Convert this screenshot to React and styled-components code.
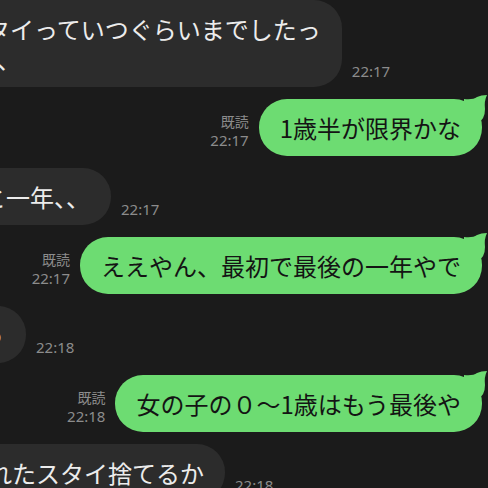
import React from 'react';
import styled, { createGlobalStyle } from 'styled-components';

const GlobalStyle = createGlobalStyle`
  html, body {
    margin: 0;
    padding: 0;
    background: #1b1b1b;
    overflow: hidden;
  }
  body {
    font-family: "Noto Sans CJK JP", "Noto Sans", sans-serif;
  }
`;

const Screen = styled.div`
  width: 488px;
  height: 488px;
  overflow: hidden;
  background: #1b1b1b;
`;

const Chat = styled.div`
  display: flex;
  flex-direction: column;
  gap: 12px;
`;

const Row = styled.div`
  display: flex;
  align-items: flex-end;
  justify-content: ${props => (props.$mine ? 'flex-end' : 'flex-start')};
  gap: 10px;
  padding-right: ${props => (props.$mine ? '6px' : '0')};
`;

const Bubble = styled.div`
  position: relative;
  flex-shrink: 0;
  margin-left: ${props => props.$shift || 0}px;
  padding: 13.5px 21px;
  border-radius: 28px;
  background: ${props => (props.$mine ? '#6ddc72' : '#2c2c2c')};
  color: ${props => (props.$mine ? '#141414' : '#ececec')};
  font-size: 24px;
  line-height: 30px;
  white-space: pre-line;
`;

const Tail = styled.svg`
  position: absolute;
  top: -4px;
  right: -6px;
  width: 24px;
  height: 28px;
`;

const Meta = styled.div`
  display: flex;
  flex-direction: column;
  align-items: flex-end;
  margin-bottom: 6px;
  color: #8c8c8c;
`;

const ReadMark = styled.span`
  font-size: 14px;
  line-height: 19px;
`;

const Time = styled.span`
  flex-shrink: 0;
  margin-bottom: ${props => (props.$alone ? '6px' : '0')};
  color: #8c8c8c;
  font-family: "Noto Sans", "Noto Sans CJK JP", sans-serif;
  font-size: 15px;
  line-height: 19px;
`;

const GreenTail = () => (
  <Tail viewBox="0 0 24 28">
    <path
      d="M0 4 Q9 5 13 2 Q17 0 23 0 Q20 6 21 14 Q21 24 14 28 L0 28 Z"
      fill="#6ddc72"
    />
  </Tail>
);

const messages = [
  { id: 1, text: 'スタイっていつぐらいまでしたっ\nけ、、', time: '22:17', shift: -59 },
  { id: 2, mine: true, text: '1歳半が限界かな', time: '22:17' },
  { id: 3, text: 'あと一年、、', time: '22:17', shift: -63 },
  { id: 4, mine: true, text: 'ええやん、最初で最後の一年やで', time: '22:17' },
  { id: 5, text: 'そうしよう', time: '22:18', shift: -136 },
  { id: 6, mine: true, text: '女の子の０〜1歳はもう最後や', time: '22:18' },
  { id: 7, text: 'よごれたスタイ捨てるか', time: '22:18', shift: -81 },
];

const Message = ({ mine, text, time, shift }) =>
  mine ? (
    <Row $mine>
      <Meta>
        <ReadMark>既読</ReadMark>
        <Time>{time}</Time>
      </Meta>
      <Bubble $mine>
        {text}
        <GreenTail />
      </Bubble>
    </Row>
  ) : (
    <Row>
      <Bubble $shift={shift}>{text}</Bubble>
      <Time $alone>{time}</Time>
    </Row>
  );

const App = () => (
  <Screen>
    <GlobalStyle />
    <Chat>
      {messages.map(m => (
        <Message key={m.id} {...m} />
      ))}
    </Chat>
  </Screen>
);

export default App;
